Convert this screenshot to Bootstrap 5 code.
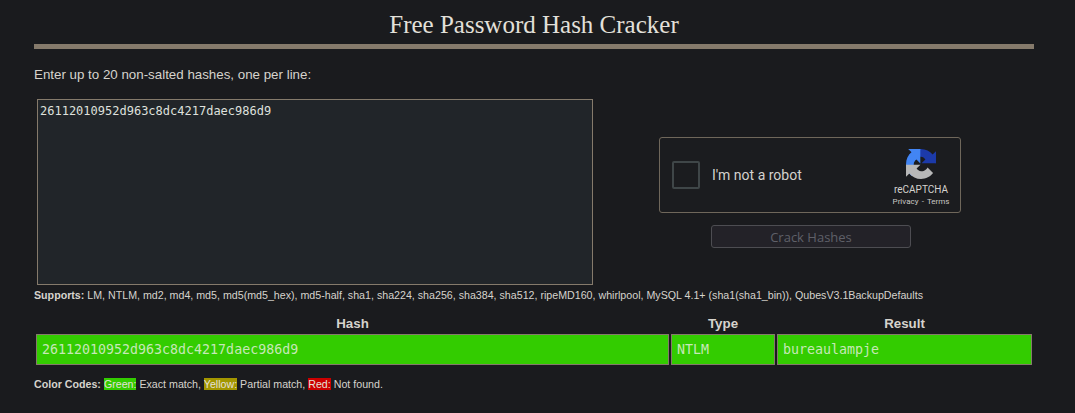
<!DOCTYPE html>
<html lang="en">
<head>
<meta charset="utf-8">
<title>Free Password Hash Cracker</title>
<link rel="stylesheet" href="https://cdn.jsdelivr.net/npm/bootstrap@5.3.0/dist/css/bootstrap.min.css">
<style>
body{background:#1a1b1e;color:#d6d3cd;font-family:"Liberation Sans",Arial,sans-serif;font-size:13.33px;line-height:normal;overflow:hidden}
.shell{width:1000px;margin-left:34px}
.page-title{font-family:"Liberation Serif",serif;font-size:25px;font-weight:400;color:#e3e0da;text-align:center;line-height:28px;margin:11px 0 0;padding-bottom:5px;border-bottom:5px solid #857a6b}
.intro{margin:0;padding-top:18px;line-height:16px}
.form-band{margin-top:16px}
.hash-col{width:559px;padding-left:3px;flex:none}
.hash-box{display:block;width:556px;height:186px;background:#212529;border:1px solid #857a6b;color:#dfe0dd;font-family:"DejaVu Sans Mono",monospace;font-size:12px;line-height:14px;padding:4px 2px;margin:0;resize:none;outline:0;border-radius:0}
.side-col{width:434px}
.captcha{width:302px;height:76px;border:1px solid #6f675b;border-radius:3px;background:#1b1c1f}
.tick{width:28px;height:28px;border:2px solid #3f4648;border-radius:2px;margin-left:12px}
.tick-label{font-family:Roboto,sans-serif;font-size:14px;color:#d4d2ce;margin-left:12px}
.brand{width:70px;margin-right:4px;padding-top:6px}
.brand svg{display:block;width:30px;height:30px}
.brand-name{font-family:Roboto,sans-serif;font-size:10px;line-height:12px;color:#d4d2ce;margin-top:5px}
.brand-links{font-family:Roboto,sans-serif;font-size:8px;word-spacing:1.2px;line-height:10px;color:#c9c7c3;margin-top:1px}
.crack-btn{width:200px;height:23px;margin:12px 0 0 2px;padding:1px 0 0;border-radius:3px;font-family:"Open Sans",sans-serif;font-size:13px;line-height:20px}
.crack-btn:disabled{background:#232228;border:1px solid #4d4d52;color:#5f6068;opacity:1}
.supports,.codes{font-size:10.67px;line-height:13px;margin:0}
.supports{padding-top:4px}
.result-grid{width:1000px;border-collapse:separate;border-spacing:2px;margin-top:11px;table-layout:fixed}
.result-grid th{text-align:center;font-weight:700;font-size:13.33px;line-height:15px;padding:1px;color:#d6d3cd}
.result-grid td{background:#33cc00;border:1px solid #857a6b;color:#c6e8b8;font-family:"DejaVu Sans Mono",monospace;font-size:13.3px;line-height:15px;padding:7px 5px}
.c1{width:633px}.c2{width:104px}.c3{width:255px}
.codes{margin-top:11px}
.tag-g,.tag-y,.tag-r{color:#e3e0da}
.tag-g{background:#33cc00}
.tag-y{background:#a39600}
.tag-r{background:#cc0000}
</style>
</head>
<body>
<main class="shell">
  <h1 class="page-title">Free Password Hash Cracker</h1>
  <p class="intro">Enter up to 20 non-salted hashes, one per line:</p>
  <form class="form-band d-flex align-items-center">
    <div class="hash-col"><textarea class="hash-box" aria-label="Hashes">26112010952d963c8dc4217daec986d9</textarea></div>
    <div class="side-col d-flex flex-column align-items-center">
      <div class="captcha d-flex align-items-center justify-content-between">
        <div class="d-flex align-items-center"><span class="tick"></span><span class="tick-label">I'm not a robot</span></div>
        <div class="brand d-flex flex-column align-items-center text-center">
          <svg viewBox="0 0 64 64" aria-hidden="true">
            <defs><path id="arm" d="M64 31.955l-.033-1.37V4.687l-7.16 7.16C51.013 4.674 42.03.072 31.955.072c-10.485 0-19.793 5.004-25.68 12.753l11.734 11.857a15.53 15.53 0 0 1 4.755-5.35c2.05-1.6 4.95-2.907 8.193-2.907.39 0 .69.046.91.13 4.02.314 7.504 2.533 9.556 5.753l-8.306 8.306c10.52-.04 22.405-.066 30.375.001z"/></defs>
            <use href="#arm" fill="#1c3aa9"/>
            <use href="#arm" fill="#4285f4" transform="rotate(-90 32 32)"/>
            <use href="#arm" fill="#b8b8b8" transform="rotate(180 32 32)"/>
          </svg>
          <div class="brand-name">reCAPTCHA</div>
          <div class="brand-links">Privacy - Terms</div>
        </div>
      </div>
      <button type="button" class="crack-btn" disabled>Crack Hashes</button>
    </div>
  </form>
  <p class="supports"><strong>Supports:</strong> LM, NTLM, md2, md4, md5, md5(md5_hex), md5-half, sha1, sha224, sha256, sha384, sha512, ripeMD160, whirlpool, MySQL 4.1+ (sha1(sha1_bin)), QubesV3.1BackupDefaults</p>
  <table class="result-grid">
    <colgroup><col class="c1"><col class="c2"><col class="c3"></colgroup>
    <thead><tr><th>Hash</th><th>Type</th><th>Result</th></tr></thead>
    <tbody><tr><td>26112010952d963c8dc4217daec986d9</td><td>NTLM</td><td>bureaulampje</td></tr></tbody>
  </table>
  <p class="codes"><strong>Color Codes:</strong> <span class="tag-g">Green:</span> Exact match, <span class="tag-y">Yellow:</span> Partial match, <span class="tag-r">Red:</span> Not found.</p>
</main>
<script src="https://cdn.jsdelivr.net/npm/bootstrap@5.3.0/dist/js/bootstrap.bundle.min.js"></script>
</body>
</html>
